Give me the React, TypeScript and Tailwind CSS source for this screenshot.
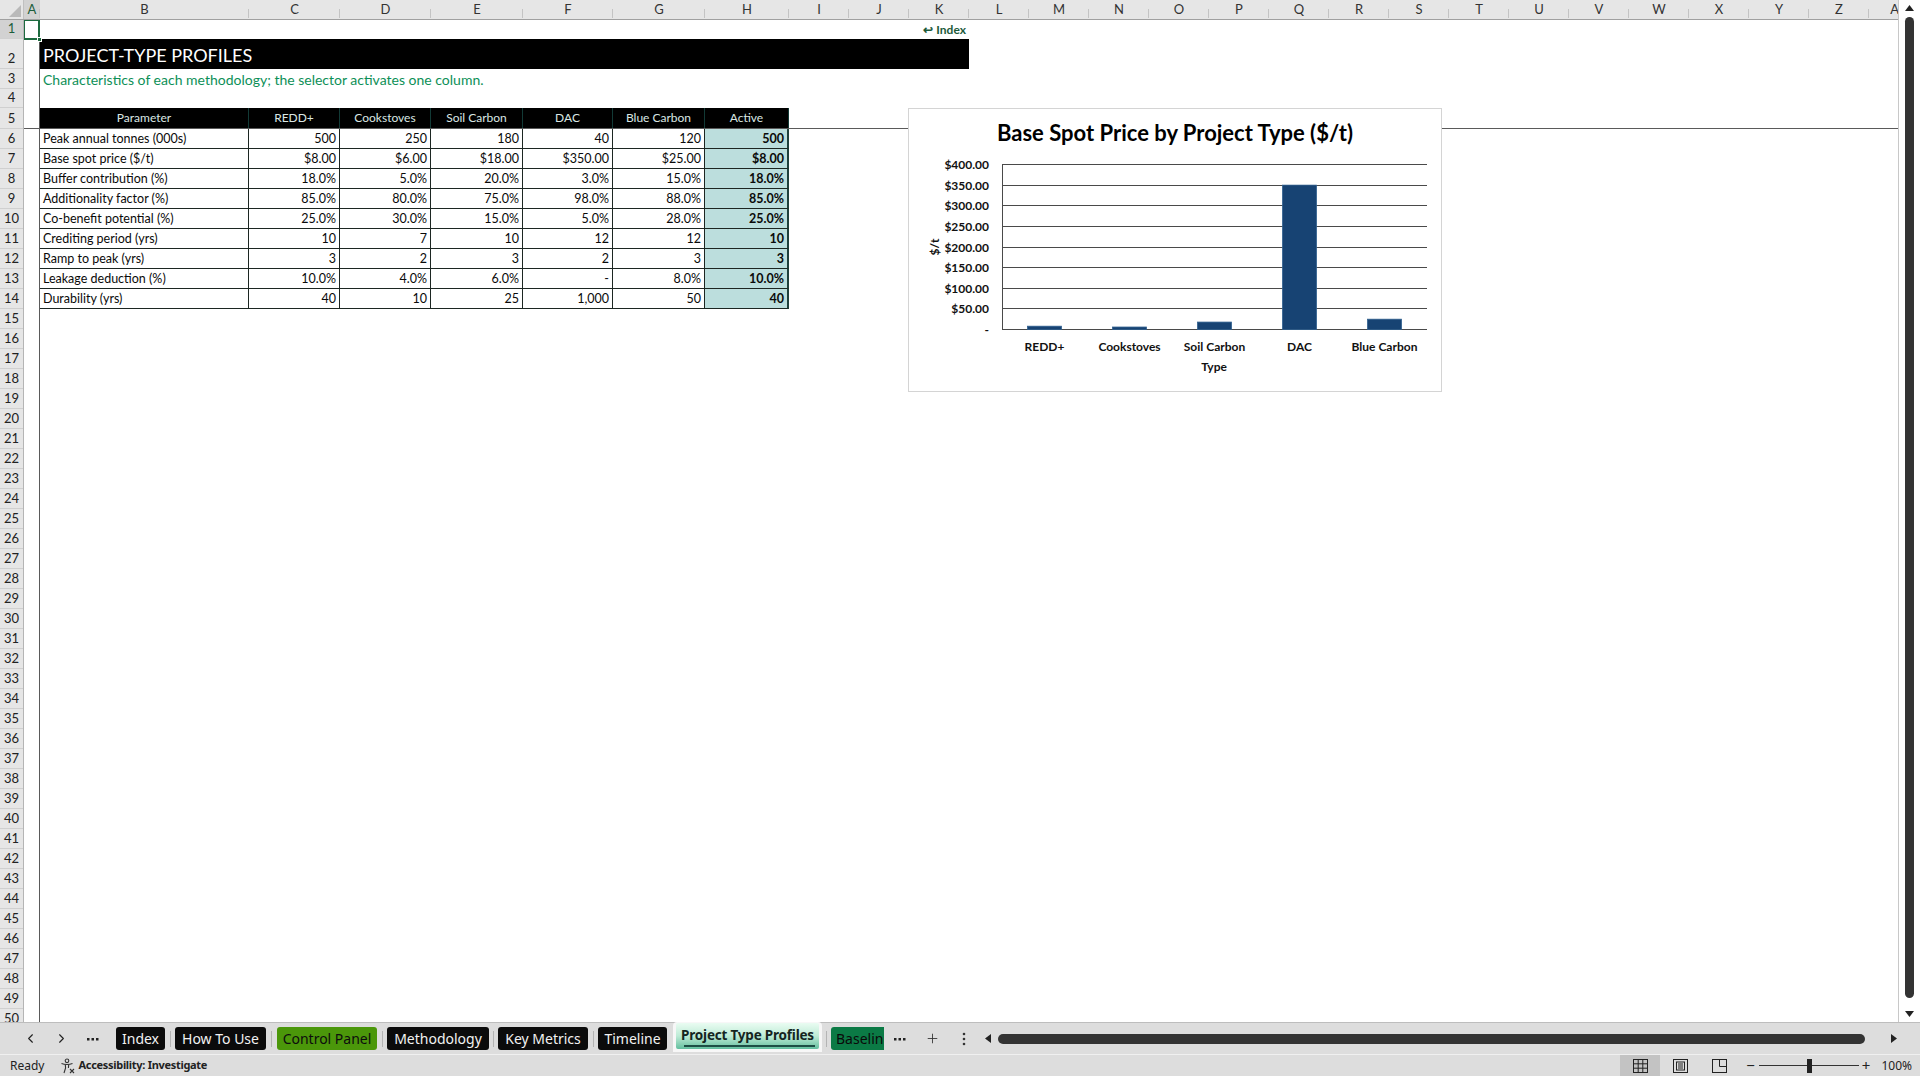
import { ChevronLeft, ChevronRight, Plus } from "lucide-react";

const sheetFont = "[font-family:Lato,'Liberation_Sans',sans-serif]";
const uiFont = "[font-family:'Noto_Sans',sans-serif]";

const colHeads = [
  { n: "A", w: "w-[16px]" },
  { n: "B", w: "w-[209px]" },
  { n: "C", w: "w-[91px]" },
  { n: "D", w: "w-[91px]" },
  { n: "E", w: "w-[92px]" },
  { n: "F", w: "w-[90px]" },
  { n: "G", w: "w-[92px]" },
  { n: "H", w: "w-[84px]" },
  ..."IJKLMNOPQRSTUVWXYZ".split("").map((n) => ({ n, w: "w-[60px]" })),
  { n: "AA", w: "w-[60px]" },
];

const topRows = [
  { n: 1, h: "h-[19px]" },
  { n: 2, h: "h-[30px]" },
  { n: 3, h: "h-[20px]" },
  { n: 4, h: "h-[19px]" },
  { n: 5, h: "h-[21px]" },
];
const bottomRows = Array.from({ length: 45 }, (_, i) => i + 6);

const tableCols = ["Parameter", "REDD+", "Cookstoves", "Soil Carbon", "DAC", "Blue Carbon", "Active"];
const tableWidths = ["w-[209px]", "w-[91px]", "w-[91px]", "w-[92px]", "w-[90px]", "w-[92px]", "w-[84px]"];

const profiles = [
  ["Peak annual tonnes (000s)", "500", "250", "180", "40", "120", "500"],
  ["Base spot price ($/t)", "$8.00", "$6.00", "$18.00", "$350.00", "$25.00", "$8.00"],
  ["Buffer contribution (%)", "18.0%", "5.0%", "20.0%", "3.0%", "15.0%", "18.0%"],
  ["Additionality factor (%)", "85.0%", "80.0%", "75.0%", "98.0%", "88.0%", "85.0%"],
  ["Co-benefit potential (%)", "25.0%", "30.0%", "15.0%", "5.0%", "28.0%", "25.0%"],
  ["Crediting period (yrs)", "10", "7", "10", "12", "12", "10"],
  ["Ramp to peak (yrs)", "3", "2", "3", "2", "3", "3"],
  ["Leakage deduction (%)", "10.0%", "4.0%", "6.0%", "-", "8.0%", "10.0%"],
  ["Durability (yrs)", "40", "10", "25", "1,000", "50", "40"],
];

const chartTypes = ["REDD+", "Cookstoves", "Soil Carbon", "DAC", "Blue Carbon"];
const chartPrices = [8, 6, 18, 350, 25];

function ColumnHeader() {
  return (
    <div className="flex h-[20px] border-b border-[#a0a0a0] bg-[#e6e6e6] text-[13px] text-[#333]">
      <div className="relative w-[24px] shrink-0 border-r border-[#c0c0c0]">
        <svg className="absolute bottom-[2px] right-[2px]" width="12" height="12" viewBox="0 0 12 12">
          <polygon points="12,0 12,12 0,12" fill="#b9b9b9" />
        </svg>
      </div>
      {colHeads.map((c) => (
        <div
          key={c.n}
          className={`relative flex shrink-0 items-center justify-center overflow-hidden ${c.w} ${
            c.n === "A" ? "bg-[#d2d2d2] text-[#1b5e3b]" : ""
          }`}
        >
          {c.n}
          <span className="absolute bottom-[1px] right-0 h-[9px] w-px bg-[#c4c4c4]" />
        </div>
      ))}
    </div>
  );
}

function RowHeader() {
  return (
    <div className="w-[24px] shrink-0 border-r border-[#b5b5b5] bg-[#e6e6e6] text-[13px] text-[#222]">
      {topRows.map((r) => (
        <div
          key={r.n}
          className={`flex items-end justify-center border-b border-[#d0d0d0] pb-[1px] leading-[17px] ${r.h} ${
            r.n === 1 ? "bg-[#d2d2d2] text-[#1b5e3b]" : ""
          }`}
        >
          {r.n}
        </div>
      ))}
      {bottomRows.map((n) => (
        <div key={n} className="flex h-[20px] items-end justify-center border-b border-[#d0d0d0] pb-[1px] leading-[17px]">
          {n}
        </div>
      ))}
    </div>
  );
}

function ProfileTable() {
  return (
    <div className="w-[749px] text-[12.5px] leading-[19px]">
      {profiles.map((row) => (
        <div key={row[0]} className="flex h-[20px]">
          {row.map((v, i) => (
            <div
              key={i}
              className={`shrink-0 overflow-hidden whitespace-nowrap border-b border-r border-[#1c2622] px-[3px] text-[#0a0a0a] ${tableWidths[i]} ${
                i === 0 ? "text-left" : "text-right"
              } ${i === 6 ? "border-r-2 border-r-[#1f403c] bg-[#bcdedd] font-bold" : "bg-white"}`}
            >
              {v}
            </div>
          ))}
        </div>
      ))}
    </div>
  );
}

function PriceChart() {
  const top = 55;
  const bottom = 220;
  const left = 93;
  const right = 518;
  const step = (bottom - top) / 8;
  const band = (right - left) / 5;
  const ticks = ["$400.00", "$350.00", "$300.00", "$250.00", "$200.00", "$150.00", "$100.00", "$50.00", "-"];

  return (
    <div className={`absolute left-[884px] top-[88px] h-[284px] w-[534px] border border-[#d4d4d4] bg-white ${sheetFont}`}>
      <svg width="532" height="282" viewBox="0 0 532 282">
        <text x={266} y={32} textAnchor="middle" fontSize={22} fontWeight={700} fill="#000">
          Base Spot Price by Project Type ($/t)
        </text>
        {ticks.map((t, i) => {
          const y = Math.round(top + i * step) + 0.5;
          return (
            <g key={t}>
              <line x1={left} x2={right} y1={y} y2={y} stroke="#4a4a4a" strokeWidth={1} />
              <text x={80} y={y + 4} textAnchor="end" fontSize={12} fontWeight={700} fill="#111">
                {t}
              </text>
            </g>
          );
        })}
        <line x1={left + 0.5} x2={left + 0.5} y1={top} y2={bottom + 1} stroke="#4a4a4a" strokeWidth={1} />
        {chartPrices.map((p, i) => {
          const h = (p / 400) * (bottom - top);
          const cx = left + band * i + band / 2;
          return (
            <rect
              key={i}
              x={cx - 17}
              y={bottom + 0.5 - h}
              width={34}
              height={h}
              fill="#174373"
              stroke="#30608f"
              strokeWidth={0.8}
            />
          );
        })}
        {chartTypes.map((t, i) => (
          <text
            key={t}
            x={left + band * i + band / 2}
            y={242}
            textAnchor="middle"
            fontSize={12}
            fontWeight={700}
            fill="#111"
          >
            {t}
          </text>
        ))}
        <text x={305} y={262} textAnchor="middle" fontSize={12} fontWeight={700} fill="#111">
          Type
        </text>
        <text
          x={0}
          y={0}
          transform="translate(30 138) rotate(-90)"
          textAnchor="middle"
          fontSize={12}
          fontWeight={700}
          fill="#111"
        >
          $/t
        </text>
      </svg>
    </div>
  );
}

function SheetBody() {
  return (
    <div className={`relative flex-1 overflow-hidden bg-white ${sheetFont}`}>
      {/* frozen rows 1-5 */}
      <div className="flex h-[109px] border-b border-[#5a5a5a]">
        <div className="w-[16px] shrink-0 border-r border-[#5a5a5a]">
          <div className="relative -ml-px -mt-px h-[21px] w-[17px] border-2 border-[#1d6b3f]">
            <span className="absolute -bottom-[4px] -right-[4px] h-[5px] w-[5px] border border-white bg-[#1d6b3f]" />
          </div>
        </div>
        <div className="flex-1">
          <div className="flex h-[19px] w-[929px] items-center justify-end pr-[3px] text-[12px] font-bold text-[#1c5a3a]">
            ↩ Index
          </div>
          <div className="flex h-[30px] w-[929px] items-end bg-black pb-[3px] pl-[3px] text-[18px] leading-[22px] text-white">
            PROJECT-TYPE PROFILES
          </div>
          <div className="flex h-[20px] items-center pl-[3px] text-[14px] text-[#0d8f57]">
            Characteristics of each methodology; the selector activates one column.
          </div>
          <div className="h-[19px]" />
          <div className="flex h-[20px] w-[749px] bg-black text-[12px] text-[#dbe7e4]">
            {tableCols.map((c, i) => (
              <div
                key={c}
                className={`flex shrink-0 items-center justify-center border-r border-[#123a36] ${tableWidths[i]}`}
              >
                {c}
              </div>
            ))}
          </div>
        </div>
      </div>
      {/* scrolling rows */}
      <div className="flex h-[893px]">
        <div className="w-[16px] shrink-0 border-r border-[#5a5a5a]" />
        <div className="flex-1">
          <ProfileTable />
        </div>
      </div>
      <PriceChart />
    </div>
  );
}

function VerticalScroll() {
  return (
    <div className="flex w-[22px] shrink-0 flex-col items-center border-l border-[#c8c8c8] bg-white pt-[5px]">
      <svg width="9" height="6" viewBox="0 0 9 6">
        <polygon points="4.5,0 9,6 0,6" fill="#222" />
      </svg>
      <div className="mt-[6px] h-[981px] w-[9px] rounded-full bg-[#333]" />
      <svg className="mb-[5px] mt-auto" width="9" height="6" viewBox="0 0 9 6">
        <polygon points="0,0 9,0 4.5,6" fill="#222" />
      </svg>
    </div>
  );
}

function Sep({ w }: { w: string }) {
  return (
    <div className={`flex h-full shrink-0 items-center justify-center ${w}`}>
      <span className="h-[16px] w-px bg-[#b4b4b4]" />
    </div>
  );
}

function Tab({ label, w, cls }: { label: string; w: string; cls: string }) {
  return (
    <div className={`flex h-[23px] shrink-0 items-center justify-center rounded-[3px] text-[14px] ${w} ${cls}`}>
      {label}
    </div>
  );
}

function Dots({ vertical }: { vertical?: boolean }) {
  return vertical ? (
    <svg width="4" height="14" viewBox="0 0 4 14">
      <circle cx="2" cy="2" r="1.3" fill="#333" />
      <circle cx="2" cy="7" r="1.3" fill="#333" />
      <circle cx="2" cy="12" r="1.3" fill="#333" />
    </svg>
  ) : (
    <svg width="12" height="4" viewBox="0 0 12 4">
      <rect x="0" y="1" width="2.5" height="2.5" fill="#222" />
      <rect x="4.5" y="1" width="2.5" height="2.5" fill="#222" />
      <rect x="9" y="1" width="2.5" height="2.5" fill="#222" />
    </svg>
  );
}

function SheetTabs() {
  return (
    <div className={`flex h-[32px] items-center border-t border-[#bdbdbd] bg-[#dddddd] pl-[15px] ${uiFont}`}>
      <div className="flex w-[31px] justify-center text-[#222]">
        <ChevronLeft size={15} strokeWidth={1.8} />
      </div>
      <div className="flex w-[31px] justify-center text-[#222]">
        <ChevronRight size={15} strokeWidth={1.8} />
      </div>
      <div className="flex w-[31px] justify-center">
        <Dots />
      </div>
      <div className="w-[8px]" />
      <Tab label="Index" w="w-[49px]" cls="bg-[#0b0b0b] text-[#f2f2f2]" />
      <Sep w="w-[10px]" />
      <Tab label="How To Use" w="w-[91px]" cls="bg-[#0b0b0b] text-[#f2f2f2]" />
      <Sep w="w-[11px]" />
      <Tab label="Control Panel" w="w-[100px]" cls="bg-[#4b970a] text-[#0d0d0d]" />
      <Sep w="w-[10px]" />
      <Tab label="Methodology" w="w-[102px]" cls="bg-[#0b0b0b] text-[#f2f2f2]" />
      <Sep w="w-[9px]" />
      <Tab label="Key Metrics" w="w-[90px]" cls="bg-[#0b0b0b] text-[#f2f2f2]" />
      <Sep w="w-[10px]" />
      <Tab label="Timeline" w="w-[69px]" cls="bg-[#0b0b0b] text-[#f2f2f2]" />
      <div className="w-[6px]" />
      <div className="mb-[2px] flex h-[30px] w-[149px] shrink-0 items-center justify-center self-end rounded-t-[4px] bg-[#f7f7f7] px-[3px] pb-[2px]">
        <div className="relative flex h-[26px] w-full items-center justify-center rounded-[2px] bg-gradient-to-b from-[#eafcf2] via-[#bdebd6] to-[#62bf9f] text-[13.5px] font-bold tracking-[-0.2px] text-[#15251f]">
          <span className="-mt-[2px]">Project Type Profiles</span>
          <span className="absolute bottom-[2px] left-[8px] right-[4px] h-[2px] bg-[#1d4f45]" />
        </div>
      </div>
      <Sep w="w-[9px]" />
      <div className="flex h-[23px] w-[53px] shrink-0 items-center overflow-hidden rounded-l-[3px] bg-[#0b7a45] pl-[5px] text-[14px] text-[#0a0a0a]">
        Baselin
      </div>
      <div className="flex w-[32px] justify-center">
        <Dots />
      </div>
      <div className="flex w-[32px] justify-center text-[#333]">
        <Plus size={15} strokeWidth={1.4} />
      </div>
      <div className="flex w-[32px] justify-center">
        <Dots vertical />
      </div>
      <div className="flex w-[16px] justify-center">
        <svg width="6" height="9" viewBox="0 0 6 9">
          <polygon points="0,4.5 6,0 6,9" fill="#222" />
        </svg>
      </div>
      <div className="ml-[2px] h-[10px] w-[867px] rounded-full bg-[#333]" />
      <div className="flex flex-1 justify-center pl-[2px]">
        <svg width="6" height="9" viewBox="0 0 6 9">
          <polygon points="0,0 6,4.5 0,9" fill="#222" />
        </svg>
      </div>
    </div>
  );
}

function StatusBar() {
  return (
    <div className={`flex h-[22px] items-center border-t border-[#f0f0f0] bg-[#dddddd] text-[12px] text-[#222] ${uiFont}`}>
      <span className="ml-[10px]">Ready</span>
      <svg className="ml-[16px]" width="16" height="16" viewBox="0 0 16 16" fill="none" stroke="#333" strokeWidth="1.1">
        <circle cx="7" cy="2.8" r="1.8" />
        <path d="M1.5 5.5c2 .8 3.5 1 5.5 1s3.5-.2 5.5-1" />
        <path d="M5.3 6.6 5.6 10 4 15M8.7 6.6 8.4 10" />
        <path d="M10 11l4 4M14 11l-4 4" />
      </svg>
      <span className="ml-[2px] text-[11px] font-bold tracking-[-0.3px]">Accessibility: Investigate</span>
      <div className="ml-auto flex h-full items-center">
        <div className="flex h-full w-[40px] items-center justify-center bg-[#c3c3c3]">
          <svg width="15" height="14" viewBox="0 0 15 14" fill="none" stroke="#222" strokeWidth="1">
            <rect x="0.5" y="0.5" width="14" height="13" />
            <path d="M5.2 0.5v13M9.8 0.5v13M0.5 4.8h14M0.5 9.2h14" />
          </svg>
        </div>
        <div className="flex h-full w-[40px] items-center justify-center">
          <svg width="15" height="14" viewBox="0 0 15 14" fill="none" stroke="#222" strokeWidth="1">
            <rect x="0.5" y="0.5" width="14" height="13" />
            <rect x="3.5" y="3" width="8" height="8" />
            <path d="M5 5h5M5 7h5M5 9h5" />
          </svg>
        </div>
        <div className="flex h-full w-[38px] items-center justify-center">
          <svg width="15" height="14" viewBox="0 0 15 14" fill="none" stroke="#222" strokeWidth="1">
            <rect x="0.5" y="0.5" width="14" height="13" />
            <path d="M7.5 0.5v7h7" />
          </svg>
        </div>
        <span className="ml-[8px] text-[15px] leading-none">−</span>
        <div className="relative ml-[4px] flex h-[14px] w-[100px] items-center">
          <span className="h-px w-full bg-[#333]" />
          <span className="absolute left-[48px] top-0 h-[14px] w-[5px] bg-[#222]" />
        </div>
        <span className="ml-[3px] text-[15px] leading-none">+</span>
        <span className="ml-[11px] mr-[8px]">100%</span>
      </div>
    </div>
  );
}

export default function App() {
  return (
    <div className="flex h-[1076px] w-[1920px] flex-col overflow-hidden bg-[#dddddd]">
      <div className="flex h-[1022px]">
        <div className="flex w-[1898px] shrink-0 flex-col overflow-hidden">
          <div className={sheetFont}>
            <ColumnHeader />
          </div>
          <div className="flex h-[1002px] overflow-hidden">
            <div className={sheetFont}>
              <RowHeader />
            </div>
            <SheetBody />
          </div>
        </div>
        <VerticalScroll />
      </div>
      <SheetTabs />
      <StatusBar />
    </div>
  );
}
